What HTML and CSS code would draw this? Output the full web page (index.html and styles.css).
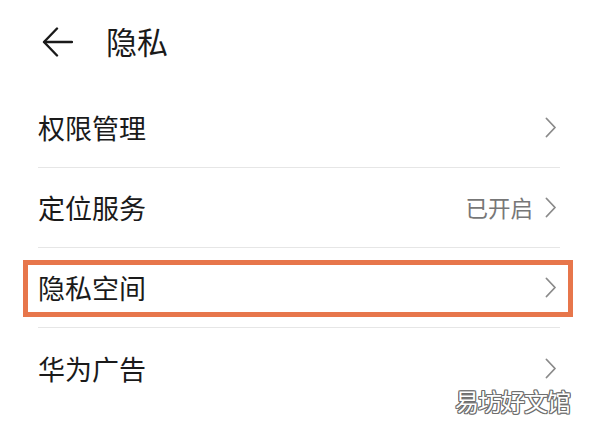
FILE: index.html
```html
<!DOCTYPE html>
<html>
<head>
    <title>隐私</title>
    <link rel="stylesheet" href="styles.css">
</head>
<body>
    <div class="page">
        <div class="header">
            <svg class="back" width="31" height="30" viewBox="0 0 31 30">
                <polyline points="15,1.5 2,15 15,28.5" fill="none" stroke="#1a1a1a" stroke-width="2.4" stroke-linejoin="round" stroke-linecap="round"/>
                <line x1="2.5" y1="15" x2="30" y2="15" stroke="#1a1a1a" stroke-width="2.4" stroke-linecap="round"/>
            </svg>
            <h1 class="title">隐私</h1>
        </div>

        <div class="list">
            <div class="row">
                <span class="label">权限管理</span>
                <span class="right">
                    <svg class="chev" width="11" height="21" viewBox="0 0 11 21"><polyline points="1.5,1.5 10,10.5 1.5,19.5" fill="none" stroke="#8a8a8a" stroke-width="1.8" stroke-linejoin="round" stroke-linecap="round"/></svg>
                </span>
            </div>
            <div class="row">
                <span class="label">定位服务</span>
                <span class="right">
                    <span class="value">已开启</span>
                    <svg class="chev" width="11" height="21" viewBox="0 0 11 21"><polyline points="1.5,1.5 10,10.5 1.5,19.5" fill="none" stroke="#8a8a8a" stroke-width="1.8" stroke-linejoin="round" stroke-linecap="round"/></svg>
                </span>
            </div>
            <div class="row marked">
                <span class="label">隐私空间</span>
                <span class="right">
                    <svg class="chev" width="11" height="21" viewBox="0 0 11 21"><polyline points="1.5,1.5 10,10.5 1.5,19.5" fill="none" stroke="#8a8a8a" stroke-width="1.8" stroke-linejoin="round" stroke-linecap="round"/></svg>
                </span>
            </div>
            <div class="row last">
                <span class="label">华为广告</span>
                <span class="right">
                    <svg class="chev" width="11" height="21" viewBox="0 0 11 21"><polyline points="1.5,1.5 10,10.5 1.5,19.5" fill="none" stroke="#8a8a8a" stroke-width="1.8" stroke-linejoin="round" stroke-linecap="round"/></svg>
                </span>
            </div>
        </div>

        <div class="watermark">易坊好文馆</div>
    </div>
</body>
</html>
```

FILE: styles.css
```css
body { margin: 0; background: #fff; font-family: "Noto Sans CJK SC", "Noto Sans", sans-serif; color: #1a1a1a; }
.page { position: relative; width: 600px; height: 435px; overflow: hidden; }

.header { display: flex; align-items: center; height: 84px; padding: 0 0 4px 42px; }
.back { display: block; }
.title { margin: 0 0 3px 33px; font-size: 31px; font-weight: 400; line-height: 1; }

.list { padding: 0 40px 0 38px; }
.row { position: relative; display: flex; align-items: center; justify-content: space-between; height: 80px; box-sizing: border-box; border-bottom: 1px solid #e6e6e6; padding-right: 4px; }
.row.last { border-bottom: none; }
.label { font-size: 27px; line-height: 1; }
.right { display: flex; align-items: center; gap: 12px; }
.value { font-size: 22.5px; line-height: 1; color: #777; }
.chev { display: block; }

/* annotation box drawn over the third row */
.marked::after { content: ""; position: absolute; left: -15px; right: -13px; top: 12px; bottom: 10px; border: 5px solid #e7764b; }

.watermark { position: absolute; right: 30px; bottom: 22px; font-size: 24px; line-height: 1; color: #fff; letter-spacing: -1px;
    text-shadow: 1px 0 #6e6e6e, -1px 0 #6e6e6e, 0 1px #6e6e6e, 0 -1px #6e6e6e, 1px 1px #6e6e6e, -1px -1px #6e6e6e, 1px -1px #6e6e6e, -1px 1px #6e6e6e; }
```
